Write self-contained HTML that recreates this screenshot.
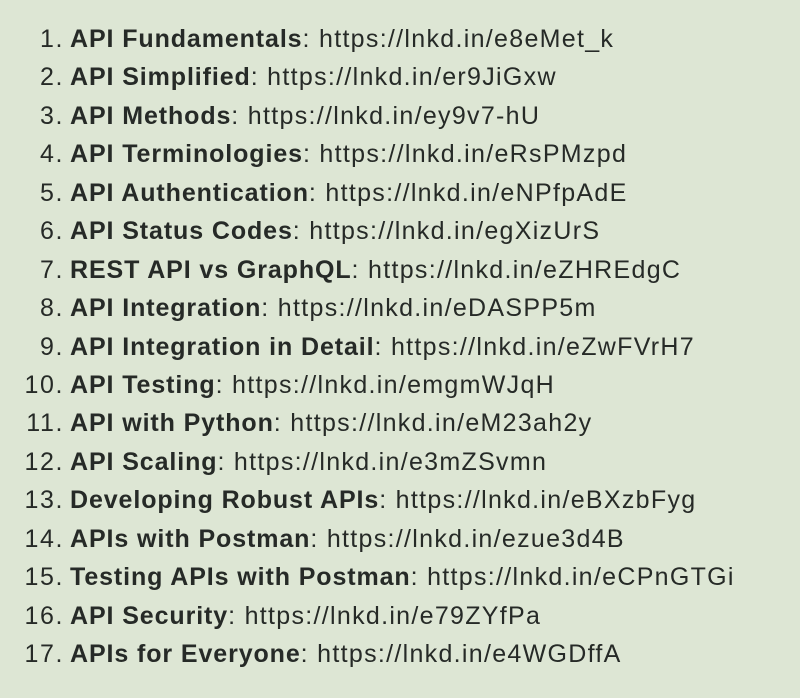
<!DOCTYPE html>
<html><head><style>
body{margin:0;width:800px;height:698px;background:#dde6d4;font-family:"Liberation Sans",Arial,sans-serif;color:#262a27;overflow:hidden}
.wrap{position:absolute;top:20px;left:0}
.l{height:38.45px;line-height:38.45px;font-size:25px;white-space:nowrap;letter-spacing:1.3px}
.n{display:inline-block;width:64px;text-align:right;margin-right:6px;letter-spacing:1.6px}
b{font-weight:bold;letter-spacing:0.9px}
</style></head><body><div class="wrap">
<div class="l"><span class="n">1.</span><b>API Fundamentals</b>: https://lnkd.in/e8eMet_k</div>
<div class="l"><span class="n">2.</span><b>API Simplified</b>: https://lnkd.in/er9JiGxw</div>
<div class="l"><span class="n">3.</span><b>API Methods</b>: https://lnkd.in/ey9v7-hU</div>
<div class="l"><span class="n">4.</span><b>API Terminologies</b>: https://lnkd.in/eRsPMzpd</div>
<div class="l"><span class="n">5.</span><b>API Authentication</b>: https://lnkd.in/eNPfpAdE</div>
<div class="l"><span class="n">6.</span><b>API Status Codes</b>: https://lnkd.in/egXizUrS</div>
<div class="l"><span class="n">7.</span><b>REST API vs GraphQL</b>: https://lnkd.in/eZHREdgC</div>
<div class="l"><span class="n">8.</span><b>API Integration</b>: https://lnkd.in/eDASPP5m</div>
<div class="l"><span class="n">9.</span><b>API Integration in Detail</b>: https://lnkd.in/eZwFVrH7</div>
<div class="l"><span class="n">10.</span><b>API Testing</b>: https://lnkd.in/emgmWJqH</div>
<div class="l"><span class="n">11.</span><b>API with Python</b>: https://lnkd.in/eM23ah2y</div>
<div class="l"><span class="n">12.</span><b>API Scaling</b>: https://lnkd.in/e3mZSvmn</div>
<div class="l"><span class="n">13.</span><b>Developing Robust APIs</b>: https://lnkd.in/eBXzbFyg</div>
<div class="l"><span class="n">14.</span><b>APIs with Postman</b>: https://lnkd.in/ezue3d4B</div>
<div class="l"><span class="n">15.</span><b>Testing APIs with Postman</b>: https://lnkd.in/eCPnGTGi</div>
<div class="l"><span class="n">16.</span><b>API Security</b>: https://lnkd.in/e79ZYfPa</div>
<div class="l"><span class="n">17.</span><b>APIs for Everyone</b>: https://lnkd.in/e4WGDffA</div>
</div></body></html>
